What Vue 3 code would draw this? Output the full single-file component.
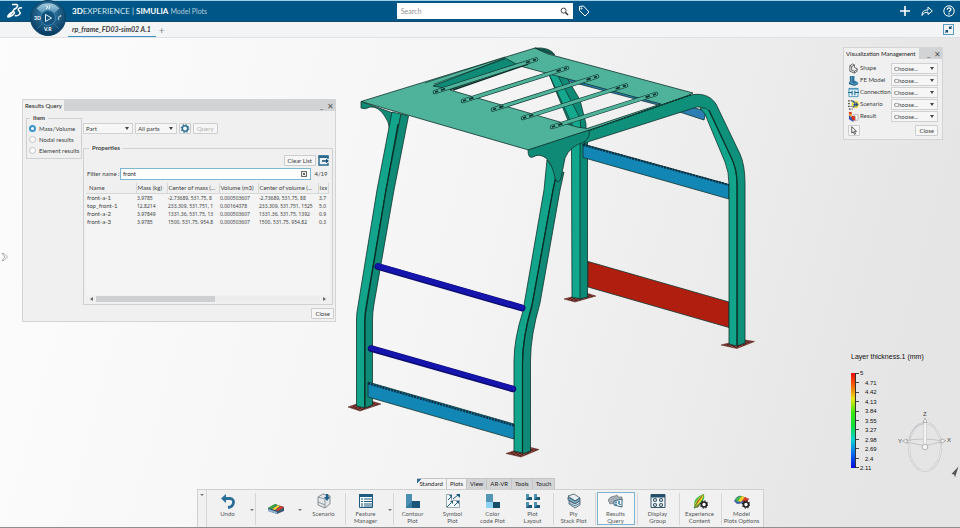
<template>
  <div class="app">
    <header class="topbar">
      <svg class="logo" viewBox="0 0 16 16" aria-label="3DS">
        <path d="M5 1.5h4.200c2.800 0 1.200 3.300-2.200 5.200M7.500 5.600C5.500 9 3 13.500 1 14c-1-1 2.500-4.500 5-5.200 3-.6 1 4-3.800 5.200" />
        <path d="M15 5c-2.500-.8-4.500.8-3.500 2.300.8 1.200 2.300 2.200 1.300 3.700-.8 1.400-3 2-5 1.600" />
      </svg>
      <button class="compass" aria-label="Compass">
        <svg viewBox="0 0 36 36">
          <defs>
            <radialGradient id="ball" cx="50%" cy="35%" r="65%">
              <stop offset="0" stop-color="#3c86b0" />
              <stop offset="1" stop-color="#06395f" />
            </radialGradient>
            <linearGradient id="shine" x1="0" y1="0" x2="0" y2="1">
              <stop offset="0" stop-color="#a9cde0" />
              <stop offset="1" stop-color="#4b8db4" />
            </linearGradient>
          </defs>
          <circle cx="18" cy="18" r="17.500" fill="url(#ball)" stroke="#0b4468" />
          <path d="M6.500 8.500a15 15 0 0 1 23 0l-6.500 5.500a7 7 0 0 0-10 0z" fill="url(#shine)" />
          <path d="M7 29l6-6M29 29l-6-6" stroke="#2e719b" stroke-width="1" />
          <circle cx="18" cy="18" r="7.500" fill="#12527d" stroke="#3d83ac" />
          <path d="M15.500 14.500v7l6-3.500z" fill="none" stroke="#e8f4fa" />
          <path d="M16 6l2 1-2 2M20 5.500l-1 3.500" stroke="#e8f4fa" fill="none" />
          <g fill="#fff" font-family="Lato, sans-serif" font-weight="700" font-size="5">
            <text x="4" y="20">3D</text>
            <text x="28" y="20" font-style="italic">i²</text>
            <text x="14" y="31">V.R</text>
          </g>
        </svg>
      </button>
      <h1 class="brand"><b>3D</b>EXPERIENCE | <b>SIMULIA</b> <span>Model Plots</span></h1>
      <form class="search" @submit.prevent>
        <input v-model="search" type="text" placeholder="Search" aria-label="Search" />
        <button type="submit" aria-label="Run search">
          <svg viewBox="0 0 10 10"><circle cx="4" cy="4" r="2.800" /><path d="M6 6l3 3" stroke-width="1.600" /></svg>
        </button>
      </form>
      <button class="bar-btn" aria-label="Tags">
        <svg viewBox="0 0 12 12"><path d="M1.500 1.500l4-.5 5.500 6-4 4-5.500-5.500z" /><circle cx="3.500" cy="3.500" r=".6" /></svg>
      </button>
      <div class="actions">
        <button class="bar-btn" aria-label="Add"><svg viewBox="0 0 12 12"><path d="M6 1v10M1 6h10" stroke-width="1.600" /></svg></button>
        <button class="bar-btn" aria-label="Share">
          <svg viewBox="0 0 12 12"><path d="M1 10.500c0-4 2-5.500 6-5.500V2l4.300 4L7 9.500v-2.300c-3 0-4.500 1-6 3.300z" /></svg>
        </button>
        <button class="bar-btn" aria-label="Help">
          <svg viewBox="0 0 12 12"><circle cx="6" cy="6" r="5.200" /><path d="M4.200 4.800c0-2.500 3.700-2.400 3.700-.3C7.900 5.800 6 5.800 6 7.300M6 8.300v1.200" stroke-width="1.300" /></svg>
        </button>
      </div>
    </header>

    <nav class="tabs">
      <a class="tab" href="#">rp_frame_FD03-sim02 A.1</a>
      <button class="new-tab" aria-label="New tab">+</button>
      <button class="collapse" aria-label="Collapse">
        <svg viewBox="0 0 10 10"><path d="M5.500 1v3.500H9L7.800 3.400 9 2 8 1 6.700 2.200zM4.500 9V5.500H1l1.200 1.100L1 8l1 1 1.300-1.200z" /></svg>
      </button>
    </nav>

    <main class="viewport">
      <svg class="model" viewBox="0 38 960 490" aria-label="Frame model">
        <defs>
          <pattern id="mesh" width="4" height="3" patternUnits="userSpaceOnUse">
            <rect width="4" height="3" fill="#9c4a44" />
            <path d="M0 0l4 3M0 3l4-3" stroke="#2c0f0e" stroke-width=".7" />
          </pattern>
        </defs>
        <g stroke="#10332d" stroke-width=".8" stroke-linejoin="round">
          <g fill="url(#mesh)" stroke="#5a201c" stroke-width=".5">
            <path d="M564 299l11 3 21-6-10-3z" />
            <path d="M721 345l16 3.500 17.500-7-12-2z" />
            <path d="M348 407l12 4 21-7-13-4z" />
            <path d="M506 453.500l15 3.500 18-7.500-12-3z" />
          </g>

          <path d="M560 73l146 38-2 9-44-14.500L560 79z" fill="#2b7fb5" />
          <path d="M548 72l10-1 9 7 13 22 6 24v16l-12-5z" fill="#0e8a76" />
          <path d="M548 72l9 2 23 44 1 14-6-1z" fill="#14a88e" />

          <path d="M571.500 140h9v158.500l-8.500-1z" fill="#10a78c" />
          <path d="M580 140h7.500v157l-7.500 2z" fill="#0d8a76" />
          <path d="M583 144l146 40.500v14.500l-146-41.500z" fill="#1286b4" />
          <path d="M583 145l146 40" stroke="#08283d" stroke-width="2" stroke-dasharray="2 1" />
          <path d="M588 261.500l141 40.500v25.500l-141-40.500z" fill="#b01e10" />

          <path d="M589 130L687 96C700 92 710 95 716 104L740 154Q745 165 745 184V343L737 346V184Q737 170 731 158L709 115Q705 106 697 107L589 141.500 584 144z" fill="#0e907a" />
          <path d="M700 108q6-1 9 3l22 46q6 12 6 27v162l-8-2V184q0-12-4-22l-20-48z" fill="#12a58b" />
          <path d="M737 184v162M709 110l22 47q6 12 6 27" fill="none" stroke="#06352c" stroke-width="1.200" />

          <path fill-rule="evenodd" d="M361 101.500L535 48l13 6L693 93l-6 3-97 34-61.500 20zM450 90l127 37 10 1.500L661 104 518 65.500z" fill="#4fb29b" />
          <path d="M433 86l72-28 13 7-67 24z" fill="#0e8a76" />
          <path d="M453 90l75-26" stroke="#082e28" stroke-width="1.600" />
          <path d="M434 84l71-25M425 83l80-26" fill="none" stroke-width=".6" />
          <path d="M535 48q15-1 20 7l-8-2z" fill="#0b5b4f" />
          <path d="M590 130L692 94.500" stroke="#07362e" stroke-width="1.400" stroke-dasharray="2 1" />

          <g v-for="rod in rods" :key="rod.x1">
            <line v-bind="rod" stroke="#10332d" stroke-width="4.400" stroke-linecap="round" />
            <line v-bind="rod" stroke="#4fb29b" stroke-width="3" stroke-linecap="round" />
            <line v-bind="rod" stroke="#0b2f29" stroke-width="1.800" pathLength="100" stroke-dasharray="3 3 4 80 4 3 3" />
          </g>

          <path d="M361 101.500v6.500q4 2 9-1 8-1 14 8 5 6 6 16l3-18z" fill="#0e8a76" />
          <path d="M392 112l9 2-15 76-19.500 117q-1.500 8-1.500 16v85l-8.500-2v-86q0-7 1.500-14L377 190z" fill="#12a58b" />
          <path d="M401 114l7.500 2-14.500 74-20 114q-1.500 8-1.500 16v85l-8 3v-85q0-10 2-20L386 190z" fill="#0e8a76" />
          <path d="M398 124l-12 66-19.500 117q-1.500 8-1.500 16v84" fill="none" stroke="#062e27" stroke-width="1.200" />

          <path d="M547 160l11 15-5 15-21 116q-9.500 32-9.500 57v90l-8.500-2v-90q0-22 9-50l21-121z" fill="#12a58b" />
          <path d="M556 176l8-4-4 18-20 113q-9.500 33-9.500 57v91l-8 3v-90q0-28 9.500-60L553 190z" fill="#0e8a76" />
          <path d="M556 176l-3 14-21 116q-9.500 32-9.500 57v90" fill="none" stroke="#062e27" stroke-width="1.200" />
          <path d="M528 150l61-20q2 7-5 12-14 4-19 16l-4 20q-3 8-6 0-2-12-9-20-7-5-13-1-5 2-5-7z" fill="#0e8a76" />

          <g fill="none" stroke="#0b0b70" stroke-linecap="round">
            <path d="M378 266.500L522 308" stroke-width="7" />
            <path d="M378 266L522 307.500" stroke="#1515ae" stroke-width="5" />
            <path d="M371 348.500l142 40.500" stroke-width="6.500" />
            <path d="M371 348l142 40.500" stroke="#1515ae" stroke-width="4.500" />
          </g>
          <path d="M368 382l146 42v15L368 397z" fill="#1286b4" />
          <path d="M368 383.500l146 42" stroke="#08283d" stroke-width="2" stroke-dasharray="2 1" />
        </g>
      </svg>

      <button class="expander" aria-label="Show panel">
        <svg viewBox="0 0 8 10"><path d="M1 1.500h2L6.500 5 3 8.500H1L4 5z" /></svg>
      </button>

      <section class="window query">
        <div class="title-bar">
          <h2>Results Query</h2>
          <button class="win-btn" aria-label="Minimize">_</button>
          <button class="win-btn" aria-label="Close window">✕</button>
        </div>
        <div class="query-body">
          <fieldset class="item">
            <legend>Item</legend>
            <label v-for="name in items" :key="name">
              <input v-model="item" type="radio" name="item" :value="name" />{{ name }}
            </label>
          </fieldset>
          <div class="query-main">
            <div class="controls">
              <span class="select part"><select aria-label="Entity"><option>Part</option></select></span>
              <span class="select parts"><select aria-label="Scope"><option>All parts</option></select></span>
              <button class="btn gear" aria-label="Settings">
                <svg viewBox="0 0 10 10"><circle cx="5" cy="5" r="3" stroke="#2f7299" stroke-width="1.700" fill="none" /><circle cx="5" cy="5" r="4.200" stroke="#2f7299" stroke-width="1.300" stroke-dasharray="1.700 1.600" fill="none" /></svg>
              </button>
              <button class="btn" disabled>Query</button>
            </div>
            <fieldset class="properties">
              <legend>Properties</legend>
              <div class="list-actions">
                <button class="btn">Clear List</button>
                <button class="export" aria-label="Export">
                  <svg viewBox="0 0 11 11"><path d="M10 4V1H1v9h9V8" fill="#e9f3f8" stroke="#2d6a8d" stroke-width="1.400" /><path d="M.5 1.800h10" stroke="#2d6a8d" stroke-width="2.400" /><path d="M4 6h5" stroke="#174e70" stroke-width="1.500" /><path d="M8 3.800L11 6 8 8.200z" fill="#174e70" /></svg>
                </button>
              </div>
              <div class="filter">
                <label for="filter">Filter name :</label>
                <div class="filter-box">
                  <input id="filter" v-model="filter" type="text" />
                  <button aria-label="Clear filter">
                    <svg viewBox="0 0 7 7"><path d="M.5.500h6v6h-6zM2 2l3 3M5 2L2 5" /></svg>
                  </button>
                </div>
                <span>4/19</span>
              </div>
              <div class="table-wrap">
                <table>
                  <colgroup>
                    <col class="c-name" /><col class="c-mass" /><col class="c-center" /><col class="c-volume" /><col class="c-cov" /><col />
                  </colgroup>
                  <thead>
                    <tr><th v-for="head in columns" :key="head">{{ head }}</th></tr>
                  </thead>
                  <tbody>
                    <tr v-for="row in rows" :key="row[0]">
                      <td v-for="(cell, i) in row" :key="i">{{ cell }}</td>
                    </tr>
                  </tbody>
                </table>
              </div>
              <div class="scroll">
                <i class="left"></i>
                <div class="track"><div class="thumb"></div></div>
                <i class="right"></i>
              </div>
            </fieldset>
          </div>
        </div>
        <div class="query-foot"><button class="btn">Close</button></div>
      </section>

      <section class="window visual">
        <div class="title-bar">
          <h2>Visualization Management</h2>
          <button class="win-btn" aria-label="Minimize">_</button>
          <button class="win-btn" aria-label="Close window">✕</button>
        </div>
        <div class="visual-body">
          <div v-for="row in visuals" :key="row.id" class="visual-row">
            <svg viewBox="0 0 12 12" v-html="row.icon"></svg>
            <label :for="row.id">{{ row.label }}</label>
            <span class="select"><select :id="row.id"><option>Choose...</option></select></span>
          </div>
          <div class="visual-foot">
            <button class="btn pointer" aria-label="Pick">
              <svg viewBox="0 0 10 10"><path d="M2.500.800v7l1.700-1.500L5.500 9.300l1.200-.6-1.200-2.800h2.300z" fill="#fff" stroke="#222" stroke-width=".8" /></svg>
            </button>
            <button class="btn">Close</button>
          </div>
        </div>
      </section>

      <section class="legend">
        <h3>Layer thickness.1 (mm)</h3>
        <div class="scale">
          <div class="ramp"></div>
          <ul class="ticks"><li v-for="n in levels" :key="n"></li></ul>
          <ol><li v-for="n in levels" :key="n">{{ n }}</li></ol>
        </div>
      </section>

      <svg class="axes" viewBox="0 0 60 75" aria-label="View orientation">
        <g fill="none" stroke="#c3c5c8" stroke-width="2">
          <ellipse cx="29" cy="42" rx="16" ry="24" />
          <ellipse cx="29" cy="42" rx="16" ry="24" stroke="#ededed" stroke-width="1" />
          <path d="M13 36q2-16 16-18M8 36q20-4 38 0M11 37l18 4 19-5" stroke-width="1" />
          <path d="M29 18v22" stroke-width="3" />
          <path d="M29 18v22" stroke="#f3f3f3" />
        </g>
        <g fill="#f6f6f6" stroke="#999" stroke-width=".7">
          <path d="M27 17.500l2-4.500 2 4.500zM11 34v4.500L6.500 36zM45 34v4.500l5-3z" />
          <circle cx="29" cy="42" r="2.800" />
        </g>
        <g fill="#444" font-family="Liberation Sans, sans-serif" font-size="6">
          <text x="27" y="11">Z</text>
          <text x="2" y="38">Y</text>
          <text x="51" y="37">X</text>
        </g>
      </svg>
      <svg class="corner" viewBox="0 0 10 12"><path d="M8.500.500L1.500 8l2.700.6L5 11.500z" fill="#555" /></svg>

      <section class="dock">
        <div class="dock-tabs">
          <button v-for="(tab, i) in sections" :key="tab" :class="{ light: i < 2 }">{{ tab }}</button>
        </div>
        <div class="toolbar">
          <button class="grip" aria-label="Toolbar menu"><i class="caret"></i></button>
          <div v-for="(group, g) in groups" :key="g" class="group">
            <template v-for="tool in group" :key="tool.label">
              <button class="tool" :class="[tool.size, { active: tool.active }]" :aria-label="tool.label || 'Plot'">
                <svg viewBox="0 0 16 16" v-html="tool.icon"></svg>
                <span>{{ tool.label }}</span>
              </button>
              <button v-if="tool.menu" class="more" aria-label="More"><i class="caret"></i></button>
            </template>
          </div>
        </div>
      </section>
    </main>
  </div>
</template>

<script setup>
import { ref } from 'vue';

const search = ref('');
const filter = ref('front');
const items = ['Mass/Volume', 'Nodal results', 'Element results'];
const item = ref(items[0]);

const columns = ['Name', 'Mass (kg)', 'Center of mass (...', 'Volume (m3)', 'Center of volume (...', 'Ixx'];
const rows = [
  ['front-a-1', '3.9785', '-2.73689, 531.75, 8', '0.000503607', '-2.73689, 531.75, 88', '3.7'],
  ['top_front-1', '12.8214', '233.309, 531.751, 1', '0.00164378', '233.309, 531.751, 1525', '5.0'],
  ['front-a-2', '3.97849', '1331.36, 531.75, 13', '0.000503607', '1331.36, 531.75, 1392', '0.9'],
  ['front-a-3', '3.9785', '1500, 531.75, 954.8', '0.000503607', '1500, 531.75, 954.82', '0.3']
];

const levels = ['5', '4.71', '4.42', '4.13', '3.84', '3.55', '3.27', '2.98', '2.69', '2.4', '2.11'];
const sections = ['Standard', 'Plots', 'View', 'AR-VR', 'Tools', 'Touch'];

const rods = [
  { x1: 435, y1: 92, x2: 536, y2: 59.5 },
  { x1: 463, y1: 101, x2: 567, y2: 68 },
  { x1: 493, y1: 109.5, x2: 597, y2: 76.5 },
  { x1: 523, y1: 118, x2: 626, y2: 85.5 },
  { x1: 552, y1: 127, x2: 656, y2: 94 }
];

const visuals = [
  {
    id: 'shape',
    label: 'Shape',
    icon: '<path d="M2 3l3-2 2 1v3l3 1v3L7 11 2 9zM2 3l2 1v4l3 1v2M4 4l3-2M7 9l3-2" fill="#eee" stroke="#555" stroke-width=".9"/>'
  },
  {
    id: 'fe',
    label: 'FE Model',
    icon: '<path d="M2 1h5v5l4 2v2l-4 2-6-2V8l1-1z" fill="#2d7097"/><path d="M7 1v5l4 2-4 2-5-2M4 1v7" stroke="#8fc3dd" stroke-width=".6" fill="none"/>'
  },
  {
    id: 'connection',
    label: 'Connection',
    icon: '<path d="M1 1.500h10v9H1z" fill="#dff0f8" stroke="#4b94b8"/><path d="M1 2h10" stroke="#4b94b8" stroke-width="1.600"/><path d="M0 6h4M8 6h4M4.500 4v5M7.500 4v5" stroke="#1f648c" stroke-width="1.100" fill="none"/>'
  },
  {
    id: 'scenario',
    label: 'Scenario',
    icon: '<path d="M0 2h5M0 5h3M0 8h4M1 11h4" stroke="#555" stroke-width="1.200" stroke-dasharray="2 1"/><circle cx="8" cy="6" r="4" fill="#f5d34a"/><path d="M5 2l3 3M5 9l3-2" stroke="#2563a0" stroke-width="1.500"/><path d="M6 6h4M8.500 4l2 2-2 2" stroke="#1d4e88" fill="none" stroke-width="1.300"/>'
  },
  {
    id: 'result',
    label: 'Result',
    icon: '<path d="M1 1h3v3H1z" fill="#d8331c"/><path d="M1 3h3v3H1z" fill="#e5a22c"/><path d="M1 5l5 3v4L1 9z" fill="#2d53b5"/><path d="M4 5l4 1v5l-4-2z" fill="#d8331c"/><path d="M6 4h5v6H8V6z" fill="#fff" stroke="#888" stroke-width=".6"/>'
  }
];

const gear =
  '<circle cx="12" cy="11.500" r="2.500" fill="#fff" stroke="#222" stroke-width="1.600"/><circle cx="12" cy="11.500" r="3.600" fill="none" stroke="#222" stroke-width="1.200" stroke-dasharray="1.400 1.400"/>';

const groups = [
  [
    {
      label: 'Undo',
      size: 'mid',
      menu: true,
      icon: '<path d="M4 5.500h6c5 0 5 8-2 9" fill="none" stroke="#2b6f98" stroke-width="2.800"/><path d="M1 5.500L6 1v9z" fill="#2b6f98"/>'
    }
  ],
  [
    {
      label: '',
      size: 'mid plot',
      menu: true,
      icon: '<path d="M0 8l7-4 9 3v4l-7 3-9-3z" fill="#3d5673"/><path d="M0 8l7-4 2 1-6 4z" fill="#37a846"/><path d="M4 9l6-4 2 1-5 4z" fill="#f2d12d"/><path d="M8 10l5-4 3 1-6 4z" fill="#df3b20"/><path d="M0 9l9 3v2l-9-3z" fill="#8fb7d3"/>'
    },
    {
      label: 'Scenario',
      size: 'mid',
      icon: '<path d="M2 4l5-3 7 2v8l-5 4-7-3z" fill="#e4e7e9" stroke="#7a858c" stroke-width=".9"/><path d="M2 4l7 2 5-3M9 6v9M2 9l7 3" fill="none" stroke="#7a858c" stroke-width=".8"/><path d="M11 1v3" stroke="#1f628c" stroke-width="2.400"/><path d="M8 4h6l-3 4z" fill="#1f628c"/>'
    }
  ],
  [
    {
      label: 'Feature\nManager',
      size: 'mid',
      menu: true,
      icon: '<path d="M1.500 1.500h13v13h-13z" fill="#f5fafc" stroke="#1f5b80"/><path d="M1 2.500h14" stroke="#1f5b80" stroke-width="3"/><path d="M3 6h2M6 6h8M3 8.500h2M6 8.500h8M3 11h2M6 11h8M3 13h2M6 13h8" stroke="#1f5b80"/>'
    }
  ],
  [
    {
      label: 'Contour\nPlot',
      size: 'small',
      icon: '<path d="M1 1h6v7h8v7H1z" fill="#1c5678"/><path d="M1 1h6v8L1 15z" fill="#4b8fb2"/><path d="M1 15l6-6v6z" fill="#367a9f"/>'
    },
    {
      label: 'Symbol\nPlot',
      size: 'small',
      icon: '<path d="M1.500 1.500h5v6h8v7h-13z" fill="#f4f8fa" stroke="#8295a0" stroke-width=".8"/><path d="M2 14l4-4M3 7l3-3M8 6l5-4M9 13l4-4" stroke="#1d5c82"/><path d="M11 1h4v4zM4 2h3v3zM5 8h3v3zM11 8h3v3z" fill="#1d5c82"/>'
    },
    {
      label: 'Color\ncode Plot',
      size: 'small',
      icon: '<path d="M1 1h7v8H1z" fill="#5596b6"/><path d="M1 9h7v6H1z" fill="#8cd2f3"/><path d="M8 9h7v6H8z" fill="#184d6c"/>'
    },
    {
      label: 'Plot\nLayout',
      size: 'small',
      icon: '<path d="M1 1h3v3h3v3H1zM9 1h3v3h3v3H9zM1 9h3v3h3v3H1zM9 9h3v3h3v3H9z" fill="#1c5678"/><path d="M1 1h3v3L1 7zM9 1h3v3L9 7zM1 9h3v3l-3 3zM9 9h3v3l-3 3z" fill="#4b8fb2"/>'
    }
  ],
  [
    {
      label: 'Ply\nStack Plot',
      icon: '<path d="M2 3l6-2 6 4-5 3z" fill="#e4edf1" stroke="#455863" stroke-width=".8"/><path d="M2 4l7 4 5-3v3l-5 3-7-4z" fill="#6fa9c4" stroke="#324650" stroke-width=".7"/><path d="M3 8l6 3 5-3v4l-5 3-6-4z" fill="#dfe7eb" stroke="#324650" stroke-width=".7"/><path d="M3 10l6 3 5-3" stroke="#42819f" fill="none"/>'
    }
  ],
  [
    {
      label: 'Results\nQuery',
      active: true,
      icon: '<path d="M0 7q2-4 7-4l2-1 1 2h4v4L2 11z" fill="#a6afb5" stroke="#6b757b" stroke-width=".7"/><path d="M6 8l8-2v8l-8-2z" fill="#f4f8fa" stroke="#3a677e"/><path d="M8 8.500v2M11 8v3M8 12v-1M12 12v-1" stroke="#2b6f98" stroke-width="1.500"/>'
    }
  ],
  [
    {
      label: 'Display\nGroup',
      icon: '<path d="M1 1.500h14v13H1z" fill="#eef4f7" stroke="#3b5768"/><path d="M1 3h14" stroke="#234f68" stroke-width="3"/><g fill="none" stroke="#3b5768" stroke-width="1.200"><circle cx="5" cy="7" r="1.500"/><circle cx="11" cy="7" r="1.500"/><circle cx="5" cy="12" r="1.500"/><circle cx="11" cy="12" r="1.500"/></g>'
    }
  ],
  [
    {
      label: 'Experience\nContent',
      icon: '<path d="M2 14Q1 4 12 1q2 8-8 12z" fill="#39b54a"/><path d="M2 14Q4 5 12 1q-1 7-8 12z" fill="#f1d72c"/><path d="M2 15Q5 7 12 1M2 15l4-1 3-4z" fill="#e0491f" stroke="#258d35" stroke-width=".7"/>' + gear
    }
  ],
  [
    {
      label: 'Model\nPlots Options',
      icon: '<path d="M0 8q3-6 8-5l7 3-3 4-9 1z" fill="#4563a5"/><path d="M1 7q3-4 6-4l1 2-4 4z" fill="#42b649"/><path d="M4 8l4-5 3 1-4 5z" fill="#f2d12d"/><path d="M8 8l3-4 4 2-3 3z" fill="#df3b20"/>' + gear
    }
  ]
];
</script>

<style>
body {
  margin: 0;
}
</style>

<style scoped>
.app {
  display: flex;
  flex-direction: column;
  height: 100vh;
  overflow: hidden;
  font-family: Lato, "Open Sans", sans-serif;
  font-size: 6px;
  line-height: 8px;
  color: #3c3f42;
}

*,
*::before,
*::after {
  box-sizing: border-box;
}

button,
input,
select {
  font: inherit;
  color: inherit;
  margin: 0;
  padding: 0;
  border: 0;
  background: none;
}

svg {
  display: block;
}

h1,
h2,
h3,
ul,
ol {
  margin: 0;
  padding: 0;
  list-style: none;
}

.topbar {
  display: flex;
  align-items: center;
  height: 22px;
  flex: none;
  padding: 0 5px 0 7px;
  background: #005686;
  border-top: 1px solid #9fd0e6;
  border-bottom: 1px solid #17486a;
  color: #fff;
}

.logo {
  width: 16px;
  height: 16px;
  fill: none;
  stroke: #fff;
  stroke-width: 1.500;
}

.compass {
  width: 36px;
  height: 36px;
  margin: 14px 0 0 7px;
  align-self: center;
  position: relative;
  z-index: 2;
}

.brand {
  margin-left: 6px;
  flex: 8;
  font-size: 8px;
  font-weight: 400;
  color: #d5e6ef;
}

.brand b {
  color: #fff;
}

.brand span {
  font-size: 7px;
  color: #b0cddd;
}

.search {
  display: flex;
  align-items: center;
  width: 176px;
  height: 16px;
  padding: 0 4px;
  background: #fff;
}

.search input {
  flex: 1;
  min-width: 0;
  font-size: 7px;
  outline: 0;
}

.search input::placeholder {
  color: #909294;
}

.search svg {
  width: 9px;
  height: 9px;
  fill: none;
  stroke: #333;
}

.bar-btn svg {
  width: 12px;
  height: 12px;
  fill: none;
  stroke: #fff;
}

.search + .bar-btn {
  margin-left: 5px;
}

.actions {
  display: flex;
  flex: 9;
  justify-content: flex-end;
  gap: 10px;
}

.tabs {
  display: flex;
  align-items: stretch;
  height: 16px;
  flex: none;
  padding: 0 6px 0 68px;
  background: #f2f4f6;
  border-bottom: 1px solid #dfe1e3;
}

.tab {
  padding: 0 5px 0 4px;
  font-size: 7px;
  line-height: 14px;
  font-weight: 700;
  font-style: italic;
  text-decoration: none;
  color: #3d3d3d;
  border-bottom: 1px solid #3e8fc4;
}

.new-tab {
  flex: 1;
  padding-left: 3px;
  text-align: left;
  font-size: 10px;
  color: #888;
}

.collapse {
  align-self: center;
  width: 11px;
  height: 11px;
  border: 1px solid #5a9bc0;
}

.collapse svg {
  fill: #174f73;
}

.viewport {
  position: relative;
  flex: 1;
  min-height: 0;
  background: linear-gradient(105deg, #fcfcfc 0%, #f5f5f5 45%, #e5e5e5 90%);
}

.model {
  position: absolute;
  inset: 0;
  width: 100%;
  height: 100%;
}

.expander {
  position: absolute;
  left: 1px;
  top: 214px;
  width: 8px;
}

.expander svg {
  fill: #fff;
  stroke: #888;
  stroke-width: 0.700;
}

.window {
  position: absolute;
  background: #f0f0f0;
  border: 1px solid #d3d4d6;
}

.query {
  left: 22px;
  top: 61px;
  width: 314px;
}

.visual {
  right: 17px;
  top: 9px;
  width: 100px;
}

.title-bar {
  display: flex;
  align-items: center;
  height: 11px;
  background: #d1d3d5;
}

.title-bar h2 {
  padding: 0 2px;
  margin-right: auto;
  font-size: 6px;
  line-height: 11px;
  font-weight: 400;
  color: #222;
  background: #f0f0f0;
  white-space: nowrap;
}

.win-btn {
  width: 9px;
  font-size: 8px;
  line-height: 8px;
  color: #555;
}

.query-body {
  display: grid;
  grid-template-columns: 56px 1fr;
  gap: 1px;
  padding: 0 2px 0 3px;
}

fieldset {
  min-width: 0;
  margin: 0;
  padding: 0;
  border: 1px solid #cfd0d2;
}

legend {
  margin-left: 3px;
  padding: 0 3px;
  font-weight: 700;
}

.item {
  align-self: start;
  margin-top: 3px;
  padding: 1px 0 2px;
}

.item label {
  display: flex;
  align-items: center;
  gap: 3px;
  height: 11px;
  padding-left: 2px;
  white-space: nowrap;
}

.item input {
  appearance: none;
  width: 7px;
  height: 7px;
  border: 1px solid #c3c4c6;
  border-radius: 50%;
  background: #fafafa;
}

.item input:checked {
  border: 2px solid #3a96cf;
}

.controls {
  display: flex;
  gap: 2px;
  margin: 12px 0 10px;
}

.select {
  position: relative;
  display: block;
  height: 11px;
  border: 1px solid #d0d1d3;
  background: #f6f6f6;
}

.select::after {
  content: "";
  position: absolute;
  right: 3px;
  top: 3px;
  border: 2px solid transparent;
  border-top: 3px solid #444;
  border-bottom: 0;
  pointer-events: none;
}

.select select {
  display: block;
  appearance: none;
  width: 100%;
  height: 9px;
  padding-left: 2px;
  line-height: 9px;
}

.part {
  width: 50px;
}

.parts {
  width: 42px;
}

.btn {
  height: 11px;
  padding: 0 3px;
  border: 1px solid #cccdcf;
  border-radius: 1px;
  background: #f6f6f6;
  line-height: 9px;
}

.btn:disabled {
  color: #b0b0b0;
}

.gear {
  width: 12px;
  padding: 0;
}

.gear svg {
  width: 10px;
  height: 9px;
}

.properties {
  padding: 3px 3px 2px 2px;
}

.list-actions {
  display: flex;
  justify-content: flex-end;
  gap: 2px;
}

.export svg {
  width: 11px;
  height: 11px;
}

.filter {
  display: flex;
  align-items: center;
  gap: 2px;
  height: 12px;
  margin: 2px 0 3px;
  padding-left: 1px;
}

.filter label {
  width: 31px;
  white-space: nowrap;
}

.filter-box {
  display: flex;
  align-items: center;
  flex: 1;
  height: 12px;
  padding: 0 3px 0 2px;
  background: #fff;
  border: 1px solid #7cb6d5;
}

.filter-box input {
  flex: 1;
  min-width: 0;
  outline: 0;
  color: #222;
}

.filter-box svg {
  width: 6px;
  height: 6px;
  fill: none;
  stroke: #444;
}

.filter span {
  width: 16px;
  text-align: center;
}

.table-wrap {
  height: 112px;
  overflow: hidden;
  background: #f4f4f4;
}

table {
  width: 100%;
  table-layout: fixed;
  border-collapse: collapse;
}

.c-name {
  width: 50px;
}

.c-mass {
  width: 31px;
}

.c-center {
  width: 52px;
}

.c-volume {
  width: 39px;
}

.c-cov {
  width: 60px;
}

th {
  height: 10px;
  padding: 0 1px;
  font-weight: 400;
  text-align: left;
  white-space: nowrap;
  background: #efefef;
  border: 1px solid #d6d7d9;
  border-width: 0 1px 1px 0;
}

th:first-child {
  padding-left: 3px;
}

td {
  height: 8px;
  padding: 0 0 0 1px;
  font-family: "Noto Sans", sans-serif;
  font-size: 5px;
  line-height: 8px;
  white-space: nowrap;
}

td:first-child {
  font-family: Lato, sans-serif;
  font-size: 6px;
}

.scroll {
  display: flex;
  align-items: center;
  gap: 3px;
  height: 7px;
  padding: 0 3px 0 4px;
}

.scroll i {
  border: 2px solid transparent;
}

.scroll .left {
  border-right: 3px solid #666;
  border-left: 0;
}

.scroll .right {
  border-left: 3px solid #666;
  border-right: 0;
}

.track {
  flex: 1;
  background: #ededed;
}

.thumb {
  width: 53%;
  height: 6px;
  background: #cdcfd1;
}

.query-foot {
  display: flex;
  justify-content: flex-end;
  padding: 3px 1px 2px;
}

.visual .title-bar h2 {
  padding-right: 3px;
}

.visual-body {
  padding: 3px 4px;
}

.visual-row {
  display: flex;
  align-items: center;
  height: 12px;
}

.visual-row svg {
  width: 11px;
  height: 11px;
}

.visual-row label {
  flex: 1;
  padding-left: 1px;
}

.visual-row .select {
  width: 47px;
}

.visual-foot {
  display: flex;
  justify-content: space-between;
  margin-top: 3px;
}

.pointer {
  width: 12px;
  padding: 0;
}

.pointer svg {
  width: 10px;
  height: 9px;
}

.legend {
  position: absolute;
  right: 36px;
  bottom: 56px;
  width: 73px;
  font-family: "Liberation Sans", sans-serif;
  color: #111;
}

.legend h3 {
  margin-bottom: 8px;
  font-size: 7px;
  font-weight: 400;
  white-space: nowrap;
}

.scale {
  display: flex;
}

.ramp {
  width: 5px;
  margin: 4px 0;
  border: 1px solid #333;
  border-width: 0 1px 0 0;
  background: linear-gradient(#f00808, #f56a08 14%, #e8e512 27%, #38e80e 42%, #0de03c 56%, #0cd4d4 70%, #0a65f0 86%, #0707e0);
}

.ticks {
  display: flex;
  flex-direction: column;
  justify-content: space-between;
  width: 3px;
  padding: 4px 0;
}

.ticks li {
  height: 1px;
  background: #444;
}

.scale ol {
  display: flex;
  flex-direction: column;
  justify-content: space-between;
  height: 103px;
  padding-left: 1px;
}

.scale ol li {
  padding-left: 5px;
}

.scale ol li:first-child,
.scale ol li:last-child {
  padding-left: 0;
}

.axes {
  position: absolute;
  right: 4px;
  bottom: 48px;
  width: 60px;
  height: 75px;
}

.corner {
  position: absolute;
  right: 0;
  bottom: 50px;
  width: 10px;
}

.dock {
  position: absolute;
  left: 0;
  right: 0;
  bottom: 0;
  display: grid;
  justify-content: center;
  border-bottom: 1px solid #8d8f91;
}

.dock-tabs {
  display: flex;
  margin-left: 220px;
}

.dock-tabs button {
  height: 11px;
  padding: 0 3px;
  background: #d2d4d5;
  border: 1px solid #c3c5c7;
  border-width: 1px 1px 0 0;
  color: #222;
}

.dock-tabs .light {
  background: #f3f3f3;
}

.dock-tabs button:first-child {
  background: linear-gradient(135deg, #2d6f98 3px, #f3f3f3 3px);
}

.toolbar {
  display: flex;
  height: 38px;
  background: #f1f1f1;
  border: 1px solid #cfd0d2;
  border-bottom: 0;
}

.grip {
  display: flex;
  justify-content: center;
  width: 9px;
  padding-top: 4px;
  border-right: 1px solid #d5d6d8;
}

.caret {
  border: 2px solid transparent;
  border-top-color: #777;
  border-bottom: 0;
}

.group {
  display: flex;
}

.group + .group {
  background: linear-gradient(#d5d6d8, #d5d6d8) 0 3px / 1px 32px no-repeat;
}

.tool {
  display: flex;
  flex-direction: column;
  align-items: center;
  width: 38px;
  height: 33px;
  margin: 2px;
  border: 1px solid transparent;
  line-height: 7px;
  color: #55585b;
}

.tool svg {
  width: 16px;
  height: 16px;
  flex: none;
  margin-bottom: 1px;
}

.tool span {
  text-align: center;
  white-space: pre;
}

.tool.small {
  width: 36px;
}

.plot {
  justify-content: center;
}

.active {
  background: #f7f7f7;
  border-color: #7fb1cf;
}

.more {
  width: 6px;
}

.more .caret {
  display: inline-block;
}
</style>
